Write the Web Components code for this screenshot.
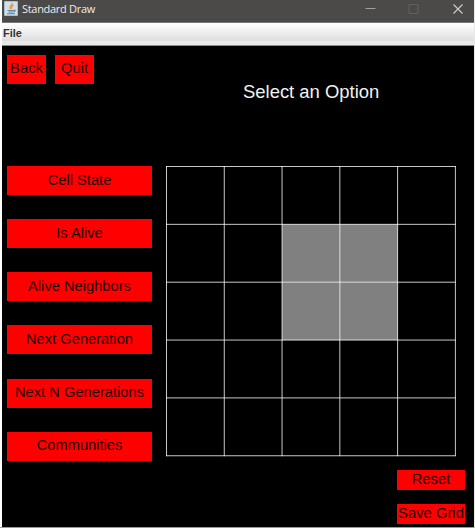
<!DOCTYPE html>
<html lang="en">
<head>
<meta charset="utf-8">
<title>Standard Draw</title>
<style>
body{margin:0;width:475px;height:530px;background:#fff;overflow:hidden}
</style>
</head>
<body>
<draw-window></draw-window>
<script>
const define = (name, html, setup) => customElements.define(name, class extends HTMLElement {
  constructor() {
    super();
    const t = document.createElement('template');
    t.innerHTML = html;
    this.attachShadow({mode: 'open'}).append(t.content.cloneNode(true));
  }
  connectedCallback() { if (setup) setup(this); }
});

define('title-bar', `<style>
:host{display:flex;align-items:center;background:#4c4a48;border-bottom:1px solid #77777a;color:#ececec;font:11px/16px "Open Sans","Noto Sans",sans-serif;box-sizing:border-box;height:23px}
.icon{width:14px;height:15px;margin:-5px 4px 0 2px;flex:none}
.name{flex:1;white-space:nowrap;margin-top:-4px;letter-spacing:-.3px}
.controls{width:109px;height:22px;flex:none}
</style>
<svg class="icon" viewBox="0 0 14 15"><rect width="14" height="15" rx="1" fill="#a9bdcd"/><rect x="1" y="1" width="12" height="13" fill="#d3e0e8"/><path d="M8 2C9 4 4.500 5 6.500 8M9.500 4C7 5.500 8 6 7.500 8" fill="none" stroke="#e89a5b" stroke-width="1.500"/><path d="M3.500 9.500h6.500M4.500 11h5M3 12.700h8M10 9q2.500 0 0 2" fill="none" stroke="#5581a8" stroke-width="1.100"/></svg>
<span class="name"><slot></slot></span>
<svg class="controls" viewBox="0 0 109 22" fill="none"><path d="M.5 8.500h10" stroke="#a0a0a0"/><path d="M44 4.500h9v9h-9z" stroke="#62605e"/><path d="M88.500 4.500l9 9M97.500 4.500l-9 9" stroke="#cfcfcf" stroke-width="1.100"/></svg>`);

define('menu-bar', `<style>
:host{display:flex;align-items:center;box-sizing:border-box;height:23px;padding:0 0 2px 1px;background:linear-gradient(#fff,#dedede 82%,#e8e8e8 84%,#e8e8e8);border-bottom:1px solid #8b8b8b;color:#333;font:bold 11px/16px "Liberation Sans",Arial,sans-serif}
</style><slot></slot>`);

define('draw-button', `<style>
:host{display:flex;align-items:center;justify-content:center;box-sizing:border-box;background:#f00;color:#1c0000;font:14.8px/17px "Liberation Sans",Arial,sans-serif;white-space:nowrap;padding-bottom:2px}
</style><slot></slot>`);

define('life-grid', `<style>
:host{display:block;width:290px;height:291px}svg{display:block}
</style><svg width="290" height="291" fill="none"></svg>`, el => {
  const w = 57.78, h = 57.85, live = [[2, 1], [3, 1], [2, 2], [3, 2]];
  let s = live.map(([x, y]) => `<rect x="${x * w + .5}" y="${y * h + .5}" width="${w}" height="${h}" fill="#808080"/>`).join('');
  for (let i = 0; i < 6; i++) {
    s += `<path d="M${i * w + .5} 0V290.200M0 ${i * h + .5}H289.800" stroke="#fff" stroke-opacity=".78"/>`;
  }
  el.shadowRoot.querySelector('svg').innerHTML = s;
});

define('draw-window', `<style>
:host{display:flex;flex-direction:column;box-sizing:border-box;width:475px;height:528px;padding-left:2px;border-right:1px solid #e8e8e8;border-bottom:1px solid #9b9b9b}
main{flex:1;background:#000;display:grid;grid-template:120px 304px 1fr / 159px 1fr;padding-left:5px}
nav{display:flex;gap:9px;padding-top:9px}
nav draw-button{width:39px;height:29px}
h1{margin:0;padding:35px 0 0 77px;color:#f2f2f2;font:18.45px/22px "Liberation Sans",Arial,sans-serif;white-space:nowrap}
.options{display:flex;flex-direction:column;gap:24.1px;padding-top:.15px}
.options draw-button{width:145px;height:29px;font-size:14.7px;padding-bottom:1.2px}
.actions{grid-column:2;display:flex;flex-direction:column;gap:14px;margin-left:231px;width:68px}
.actions draw-button{height:20px;padding-bottom:2px}
</style>
<title-bar>Standard Draw</title-bar>
<menu-bar>File</menu-bar>
<main>
<nav><draw-button>Back</draw-button><draw-button>Quit</draw-button></nav>
<h1>Select an Option</h1>
<div class="options"><draw-button>Cell State</draw-button><draw-button>Is Alive</draw-button><draw-button>Alive Neighbors</draw-button><draw-button>Next Generation</draw-button><draw-button>Next N Generations</draw-button><draw-button>Communities</draw-button></div>
<life-grid></life-grid>
<div class="actions"><draw-button>Reset</draw-button><draw-button>Save Grid</draw-button></div>
</main>`);
</script>
</body>
</html>
